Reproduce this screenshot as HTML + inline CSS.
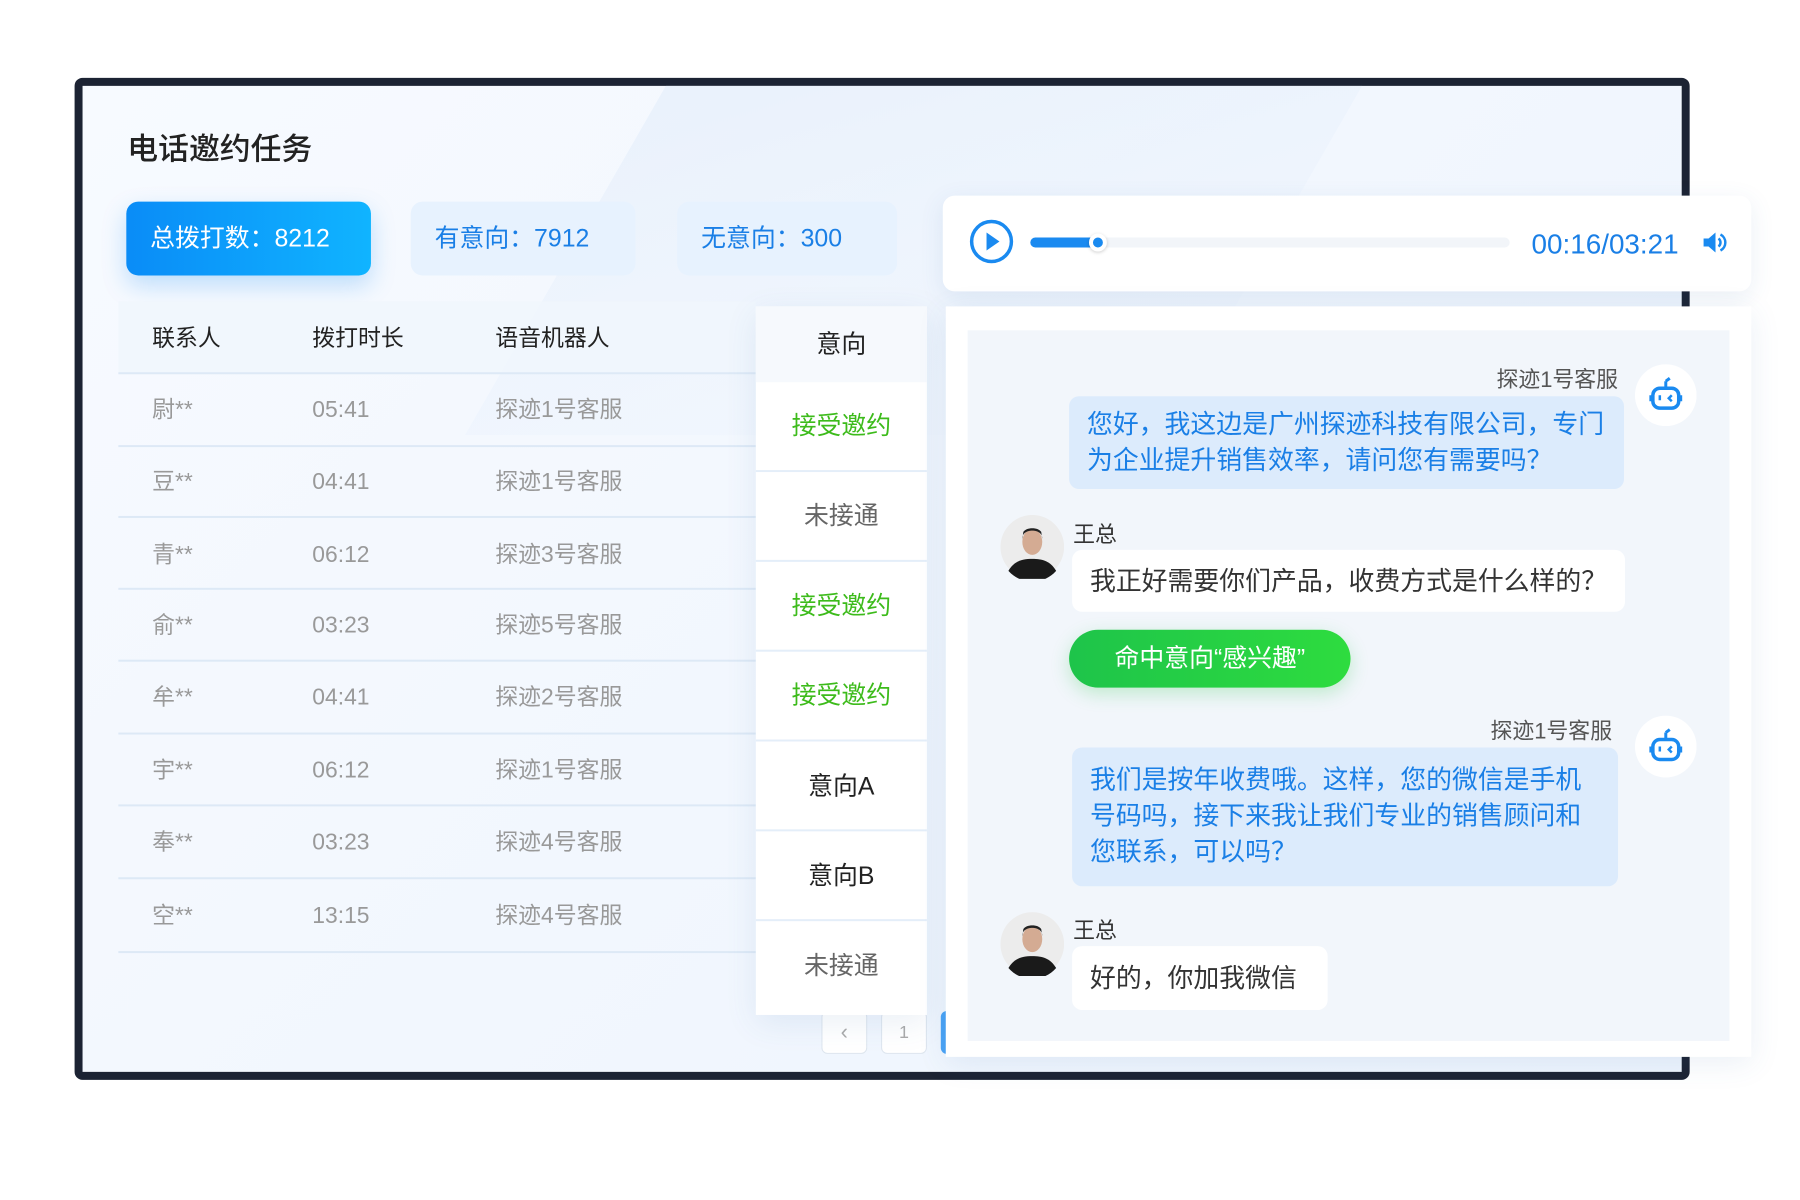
<!DOCTYPE html>
<html><head><meta charset="utf-8"><style>
*{margin:0;padding:0;box-sizing:border-box}
body{width:1800px;height:1200px;background:#fff;font-family:"Liberation Sans","Noto Sans CJK SC",sans-serif;position:relative;overflow:hidden}
#w{position:absolute;left:0;top:0;width:1800px;height:1200px;transform-origin:0 0;transform:scale(0.9945,0.998)}
.a{position:absolute}
.frame{left:75px;top:78px;width:1624px;height:1004px;border:8px solid #1c2333;border-radius:8px;background:linear-gradient(135deg,#f7faff 0%,#f2f7fe 50%,#edf4fd 100%);overflow:hidden}
.stat{top:202px;height:74px;border-radius:12px;font-size:25px;line-height:74px;padding-left:24px}
.hd{font-size:23px;color:#222;line-height:30px}
.row{font-size:23px;color:#999;line-height:30px;height:30px}
.line{height:2px;background:#dde9f6;left:119px;width:641px}
.ic{left:760px;width:172px;height:90px;font-size:25px;text-align:center;line-height:90px}
.sep{left:760px;width:172px;height:2px;background:#e4eef9}
.bub{border-radius:10px;font-size:26px;line-height:36px;padding:0 18px}
.name{font-size:22px;color:#444}
</style></head><body><div id="w">
<div class="a frame">
 <div class="a" style="left:500px;top:-50px;width:700px;height:400px;background:linear-gradient(160deg,rgba(225,236,250,0.6),rgba(255,255,255,0));transform:skewX(-30deg)"></div>
</div>
<div class="a" style="left:128px;top:124px;font-size:31px;color:#222;font-weight:500">电话邀约任务</div>
<div class="a stat" style="left:127px;width:246px;background:linear-gradient(90deg,#0a8cf7,#10b4ff);color:#fff;box-shadow:0 10px 24px rgba(20,140,240,0.25)">总拨打数：8212</div>
<div class="a stat" style="left:413px;width:226px;background:#e7f2fe;color:#1a7fe6">有意向：7912</div>
<div class="a stat" style="left:681px;width:221px;background:#e7f2fe;color:#1a7fe6">无意向：300</div>

<div class="a" style="left:119px;top:302px;width:641px;height:72px;background:rgba(240,246,253,0.8)"></div>
<div class="a hd" style="left:153px;top:323px">联系人</div>
<div class="a hd" style="left:314px;top:323px">拨打时长</div>
<div class="a hd" style="left:498px;top:323px">语音机器人</div>
<div class="a line" style="top:373px"></div>

<div class="a row" style="left:153px;top:395px">尉**</div><div class="a row" style="left:314px;top:395px">05:41</div><div class="a row" style="left:498px;top:395px">探迹1号客服</div><div class="a line" style="top:446px"></div>
<div class="a row" style="left:153px;top:467px">豆**</div><div class="a row" style="left:314px;top:467px">04:41</div><div class="a row" style="left:498px;top:467px">探迹1号客服</div><div class="a line" style="top:517px"></div>
<div class="a row" style="left:153px;top:540px">青**</div><div class="a row" style="left:314px;top:540px">06:12</div><div class="a row" style="left:498px;top:540px">探迹3号客服</div><div class="a line" style="top:589px"></div>
<div class="a row" style="left:153px;top:611px">俞**</div><div class="a row" style="left:314px;top:611px">03:23</div><div class="a row" style="left:498px;top:611px">探迹5号客服</div><div class="a line" style="top:661px"></div>
<div class="a row" style="left:153px;top:683px">牟**</div><div class="a row" style="left:314px;top:683px">04:41</div><div class="a row" style="left:498px;top:683px">探迹2号客服</div><div class="a line" style="top:734px"></div>
<div class="a row" style="left:153px;top:756px">宇**</div><div class="a row" style="left:314px;top:756px">06:12</div><div class="a row" style="left:498px;top:756px">探迹1号客服</div><div class="a line" style="top:806px"></div>
<div class="a row" style="left:153px;top:828px">奉**</div><div class="a row" style="left:314px;top:828px">03:23</div><div class="a row" style="left:498px;top:828px">探迹4号客服</div><div class="a line" style="top:879px"></div>
<div class="a row" style="left:153px;top:902px">空**</div><div class="a row" style="left:314px;top:902px">13:15</div><div class="a row" style="left:498px;top:902px">探迹4号客服</div><div class="a line" style="top:953px"></div>

<div class="a" style="left:826px;top:1013px;width:46px;height:43px;border:1px solid #dde5ee;border-radius:6px;background:#fff;color:#aaa;text-align:center;line-height:40px;font-size:22px">‹</div>
<div class="a" style="left:886px;top:1013px;width:46px;height:43px;border:1px solid #dde5ee;border-radius:6px;background:#fff;color:#aaa;text-align:center;line-height:41px;font-size:18px">1</div>
<div class="a" style="left:946px;top:1013px;width:20px;height:43px;border-radius:6px;background:#4aa3f5"></div>

<div class="a" style="left:760px;top:307px;width:172px;height:710px;background:#fff;box-shadow:0 8px 30px rgba(60,110,170,0.1)"></div>
<div class="a" style="left:760px;top:307px;width:172px;height:76px;background:#f6f9fd"></div>
<div class="a ic" style="top:300px;color:#222">意向</div>
<div class="a ic" style="top:382px;color:#3dbb1b">接受邀约</div><div class="a sep" style="top:471px"></div>
<div class="a ic" style="top:472px;color:#666">未接通</div><div class="a sep" style="top:561px"></div>
<div class="a ic" style="top:562px;color:#3dbb1b">接受邀约</div><div class="a sep" style="top:651px"></div>
<div class="a ic" style="top:652px;color:#3dbb1b">接受邀约</div><div class="a sep" style="top:741px"></div>
<div class="a ic" style="top:743px;color:#222">意向A</div><div class="a sep" style="top:831px"></div>
<div class="a ic" style="top:833px;color:#222">意向B</div><div class="a sep" style="top:921px"></div>
<div class="a ic" style="top:923px;color:#666">未接通</div>

<div class="a" style="left:948px;top:196px;width:813px;height:96px;background:#fff;border-radius:12px;box-shadow:0 6px 24px rgba(60,110,170,0.1)"></div>
<svg class="a" style="left:974px;top:219px" width="46" height="46" viewBox="0 0 46 46"><circle cx="23" cy="23" r="20" fill="none" stroke="#1a8af0" stroke-width="3.5"/><path d="M18 14 L31 23 L18 32Z" fill="#1a8af0"/></svg>
<div class="a" style="left:1036px;top:238px;width:482px;height:10px;border-radius:5px;background:#f2f5f9"></div>
<div class="a" style="left:1036px;top:238px;width:70px;height:10px;border-radius:5px;background:#1a8af0"></div>
<div class="a" style="left:1095px;top:234px;width:18px;height:18px;border-radius:50%;background:#1a8af0;border:4px solid #fff;box-shadow:0 1px 4px rgba(0,0,0,0.2)"></div>
<div class="a" style="left:1540px;top:229px;font-size:28px;color:#1a7fe6">00:16/03:21</div>
<svg class="a" style="left:1710px;top:229px" width="28" height="28" viewBox="0 0 28 28"><path d="M3 10h5l7-6v20l-7-6H3z" fill="#1a8af0"/><path d="M18 10a5 5 0 0 1 0 8M20 6a9 9 0 0 1 0 16" fill="none" stroke="#1a8af0" stroke-width="2.5"/></svg>

<div class="a" style="left:951px;top:307px;width:810px;height:752px;background:#fff;box-shadow:0 6px 28px rgba(60,110,170,0.1)"></div>
<div class="a" style="left:973px;top:331px;width:766px;height:712px;background:#f2f6fb"></div>

<svg class="a" style="left:1644px;top:365px" width="62" height="62" viewBox="0 0 62 62"><circle cx="31" cy="31" r="31" fill="#fff"/><rect x="18" y="24" width="26" height="20" rx="7" fill="none" stroke="#1a8af0" stroke-width="3.5"/><path d="M31 24v-7M31 17l4-3" stroke="#1a8af0" stroke-width="3" fill="none"/><path d="M25 31v5M37 31l-3 3 3 3" stroke="#1a8af0" stroke-width="2.5" fill="none"/><path d="M16 31v6M46 31v6" stroke="#1a8af0" stroke-width="3"/></svg>
<div class="a name" style="right:173px;top:363px;color:#555">探迹1号客服</div>
<div class="a bub" style="left:1075px;top:397px;width:558px;height:93px;background:#dcebfc;color:#1a7fe6;padding-top:10px">您好，我这边是广州探迹科技有限公司，专门为企业提升销售效率，请问您有需要吗？</div>

<svg class="a" style="left:1006px;top:516px" width="64" height="64" viewBox="0 0 64 64"><circle cx="32" cy="32" r="32" fill="#ececec"/><path d="M8 56c6-10 14-12 24-12s18 2 24 12a32 32 0 0 1-48 0z" fill="#1a1a1a"/><ellipse cx="32" cy="27" rx="10" ry="13" fill="#d4ab93"/><path d="M22 24c-1-11 21-11 20 0l-1-7c-3-5-15-5-18 0z" fill="#222"/></svg>
<div class="a name" style="left:1079px;top:518px;color:#333">王总</div>
<div class="a bub" style="left:1078px;top:551px;width:556px;height:62px;background:#fff;color:#333;line-height:62px">我正好需要你们产品，收费方式是什么样的？</div>
<div class="a" style="left:1075px;top:631px;width:283px;height:58px;border-radius:29px;background:linear-gradient(90deg,#1ec44a,#2edc3f);color:#fff;font-size:25px;line-height:58px;text-align:center;box-shadow:0 6px 18px rgba(40,200,70,0.25)">命中意向“感兴趣”</div>

<svg class="a" style="left:1644px;top:717px" width="62" height="62" viewBox="0 0 62 62"><circle cx="31" cy="31" r="31" fill="#fff"/><rect x="18" y="24" width="26" height="20" rx="7" fill="none" stroke="#1a8af0" stroke-width="3.5"/><path d="M31 24v-7M31 17l4-3" stroke="#1a8af0" stroke-width="3" fill="none"/><path d="M25 31v5M37 31l-3 3 3 3" stroke="#1a8af0" stroke-width="2.5" fill="none"/><path d="M16 31v6M46 31v6" stroke="#1a8af0" stroke-width="3"/></svg>
<div class="a name" style="right:179px;top:715px;color:#555">探迹1号客服</div>
<div class="a bub" style="left:1078px;top:749px;width:549px;height:139px;background:#dcebfc;color:#1a7fe6;padding-top:14px">我们是按年收费哦。这样，您的微信是手机号码吗，接下来我让我们专业的销售顾问和您联系，可以吗？</div>

<svg class="a" style="left:1006px;top:914px" width="64" height="64" viewBox="0 0 64 64"><circle cx="32" cy="32" r="32" fill="#ececec"/><path d="M8 56c6-10 14-12 24-12s18 2 24 12a32 32 0 0 1-48 0z" fill="#1a1a1a"/><ellipse cx="32" cy="27" rx="10" ry="13" fill="#d4ab93"/><path d="M22 24c-1-11 21-11 20 0l-1-7c-3-5-15-5-18 0z" fill="#222"/></svg>
<div class="a name" style="left:1079px;top:915px;color:#333">王总</div>
<div class="a bub" style="left:1078px;top:948px;width:257px;height:64px;background:#fff;color:#333;line-height:64px">好的，你加我微信</div>
</div></body></html>
